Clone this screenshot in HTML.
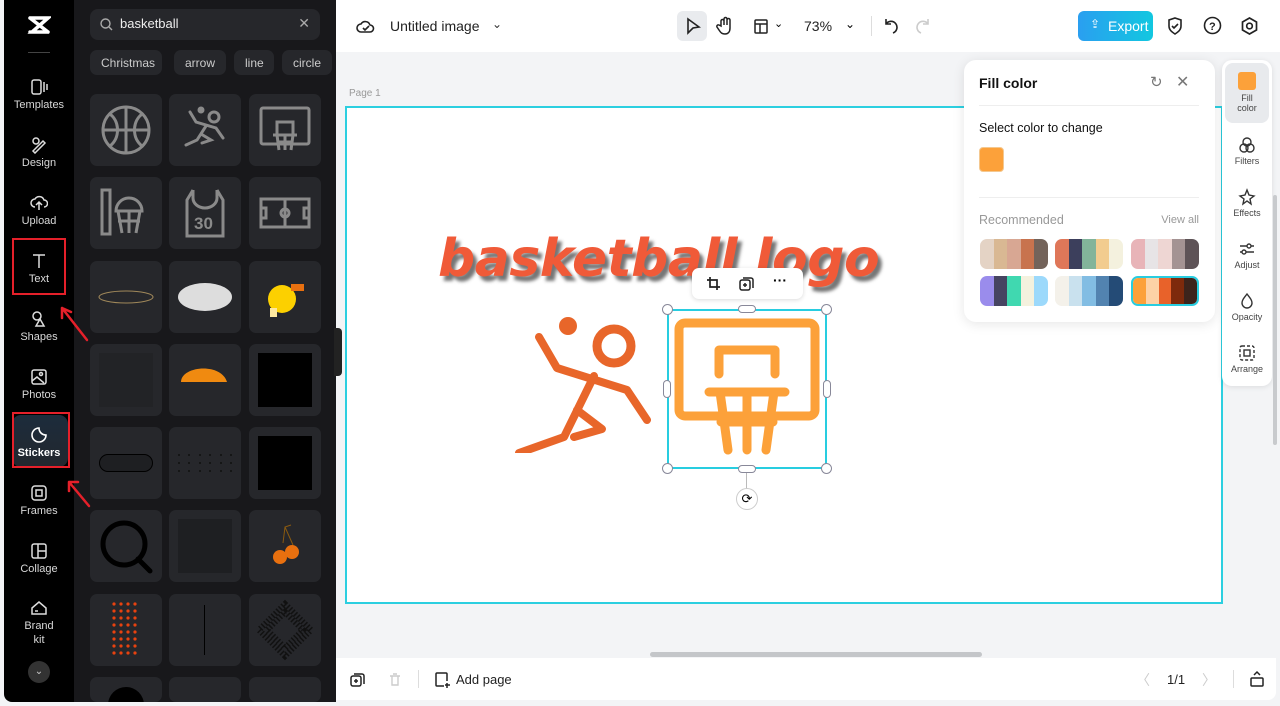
<!DOCTYPE html>
<html><head><meta charset="utf-8"><style>
*{box-sizing:border-box;margin:0;padding:0}
html,body{width:1280px;height:706px;overflow:hidden}
body{background:#f3f4f6;font-family:"Liberation Sans",sans-serif;position:relative}
.nav{position:absolute;left:4px;top:0;width:70px;height:702px;background:#000;border-radius:0 0 0 8px}
.ni{position:absolute;left:0;width:70px;text-align:center;color:#d8d8d8;font-size:11px}
.ni svg{display:block;margin:0 auto 3px}
.panel{position:absolute;left:74px;top:0;width:262px;height:702px;background:#18181b;overflow:hidden}
.search{position:absolute;left:16px;top:9px;width:230px;height:31px;background:#26272b;border-radius:8px;color:#eee;font-size:13px;padding:7px 0 0 30px}
.chip{position:absolute;top:50px;height:25px;background:#26272b;border-radius:7px;color:#ccc;font-size:12px;padding:6px 11px 0;white-space:nowrap}
.tile{position:absolute;width:72px;height:72px;background:#26272b;border-radius:7px}
.top{position:absolute;left:336px;top:0;width:944px;height:52px;background:#fff}
.bot{position:absolute;left:336px;top:658px;width:940px;height:42px;background:#fff;border-radius:0 0 8px 0}
.page{position:absolute;left:345px;top:106px;width:878px;height:498px;background:#fff;border:2px solid #2ccfe0}
.fc{position:absolute;left:964px;top:60px;width:251px;height:262px;background:#fff;border-radius:12px;box-shadow:0 2px 12px rgba(0,0,0,.1)}
.pal{position:absolute;width:68px;height:30px;border-radius:7px;overflow:hidden;display:flex}
.pal i{flex:1}
.rs{position:absolute;left:1222px;top:60px;width:50px;height:326px;background:#fff;border-radius:10px;box-shadow:0 1px 6px rgba(0,0,0,.1)}
.ri{position:absolute;left:0;width:50px;text-align:center;font-size:9px;color:#444}
.ri svg{display:block;margin:0 auto 2px}
</style></head><body>
<div class="nav">
 <svg style="position:absolute;left:23px;top:15px" width="24" height="22" viewBox="0 0 24 22"><path d="M3 3h18L5 17h16M3 17h0M3 3l18 14" stroke="#fff" stroke-width="3.5" fill="none" stroke-linecap="round"/></svg>
 <div style="position:absolute;left:24px;top:52px;width:22px;height:1px;background:#444"></div>
 <div class="ni" style="top:78px"><svg width="18" height="18" viewBox="0 0 18 18" fill="none" stroke="#ddd" stroke-width="1.5"><rect x="2" y="2" width="9" height="14" rx="2"/><path d="M14 4v10M17 6v6"/></svg>Templates</div>
 <div class="ni" style="top:136px"><svg width="18" height="18" viewBox="0 0 18 18" fill="none" stroke="#ddd" stroke-width="1.5"><circle cx="6" cy="5" r="3"/><path d="M3 15l10-10 2 2-10 10z"/></svg>Design</div>
 <div class="ni" style="top:194px"><svg width="18" height="18" viewBox="0 0 18 18" fill="none" stroke="#ddd" stroke-width="1.5"><path d="M5 13a4 4 0 010-8 5 5 0 019 1 3.5 3.5 0 010 7M9 9v7M6 11l3-3 3 3"/></svg>Upload</div>
 <div class="ni" style="top:252px;color:#ddd"><svg width="18" height="18" viewBox="0 0 18 18" fill="none" stroke="#ddd" stroke-width="1.5"><path d="M3 3h12M9 3v13"/></svg>Text</div>
 <div style="position:absolute;left:8px;top:238px;width:54px;height:57px;border:2px solid #e5202a"></div>
 <div class="ni" style="top:310px"><svg width="18" height="18" viewBox="0 0 18 18" fill="none" stroke="#ddd" stroke-width="1.5"><circle cx="7" cy="6" r="4"/><path d="M10 9l-4 7h8z"/></svg>Shapes</div>
 <div class="ni" style="top:368px"><svg width="18" height="18" viewBox="0 0 18 18" fill="none" stroke="#ddd" stroke-width="1.5"><rect x="2" y="2" width="14" height="14" rx="2"/><circle cx="11" cy="6" r="1.5"/><path d="M2 13l5-4 7 6"/></svg>Photos</div>
 <div style="position:absolute;left:8px;top:415px;width:56px;height:52px;border-radius:9px;background:linear-gradient(#1c2c3c,#23272e)"></div>
 <div class="ni" style="top:426px;color:#fff;font-weight:bold"><svg width="18" height="18" viewBox="0 0 18 18" fill="none" stroke="#fff" stroke-width="1.6"><path d="M16 9a7 7 0 11-7-7c0 4 3 7 7 7z"/></svg>Stickers</div>
 <div style="position:absolute;left:8px;top:412px;width:58px;height:56px;border:2px solid #e5202a"></div>
 <div class="ni" style="top:484px"><svg width="18" height="18" viewBox="0 0 18 18" fill="none" stroke="#ddd" stroke-width="1.5"><rect x="2" y="2" width="14" height="14" rx="3"/><rect x="6" y="6" width="6" height="6"/></svg>Frames</div>
 <div class="ni" style="top:542px"><svg width="18" height="18" viewBox="0 0 18 18" fill="none" stroke="#ddd" stroke-width="1.5"><rect x="2" y="2" width="14" height="14" rx="2"/><path d="M8 2v14M8 9h8"/></svg>Collage</div>
 <div class="ni" style="top:600px;line-height:14px"><svg width="18" height="16" viewBox="0 0 18 16" fill="none" stroke="#ddd" stroke-width="1.5"><path d="M2 8l7-6 7 6v6H2zM5 11h3"/></svg>Brand<br>kit</div>
 <div style="position:absolute;left:24px;top:661px;width:22px;height:22px;border-radius:50%;background:#333;color:#ccc;font-size:10px;text-align:center;line-height:22px">⌄</div>
</div>
<div class="panel">
 <div class="search"><svg style="position:absolute;left:10px;top:9px" width="13" height="13"><circle cx="5.5" cy="5.5" r="4.5" stroke="#aaa" fill="none" stroke-width="1.4"/><path d="M9 9l3 3" stroke="#aaa" stroke-width="1.4"/></svg>basketball<span style="position:absolute;right:10px;top:6px;color:#aaa;font-size:14px">✕</span></div>
 <div class="chip" style="left:16px;width:72px">Christmas</div>
 <div class="chip" style="left:100px;width:52px">arrow</div>
 <div class="chip" style="left:160px;width:40px">line</div>
 <div class="chip" style="left:208px;width:50px">circle</div>
 <div class="tile" style="left:16px;top:94px"><svg width="72" height="72" fill="none" stroke="#8a8a8a" stroke-width="3"><circle cx="36" cy="36" r="23"/><path d="M13 36h46M36 13v46M20 20c10 8 10 24 0 32M52 20c-10 8-10 24 0 32"/></svg></div>
 <div class="tile" style="left:95px;top:94px"><svg width="72" height="72" fill="none" stroke="#8a8a8a" stroke-width="3" stroke-linecap="round"><circle cx="32" cy="16" r="2" fill="#8a8a8a"/><circle cx="45" cy="23" r="5"/><path d="M21 18l6 10 20 6 7 10M37 32l-9 14-11 5M32 40l10 6-9 3"/></svg></div>
 <div class="tile" style="left:175px;top:94px"><svg width="72" height="72" fill="none" stroke="#8a8a8a" stroke-width="3"><rect x="12" y="14" width="48" height="36" rx="2"/><path d="M28 40v-12h16v12M24 41h24M28 41l2 15M44 41l-2 15M36 41v15M28 48h16"/></svg></div>
 <div class="tile" style="left:16px;top:177px"><svg width="72" height="72" fill="none" stroke="#8a8a8a" stroke-width="3"><rect x="12" y="13" width="8" height="44"/><path d="M26 34a13 13 0 0126 0zM28 34l4 22M50 34l-4 22M39 34v22M28 44h22"/></svg></div>
 <div class="tile" style="left:95px;top:177px"><svg width="72" height="72" fill="none" stroke="#8a8a8a" stroke-width="3"><path d="M24 13v8a12 10 0 0024 0v-8M24 13l-6 10v36h36V23l-6-10"/><text x="25" y="52" font-size="17" font-weight="bold" fill="#8a8a8a" stroke="none" font-family="Liberation Sans">30</text></svg></div>
 <div class="tile" style="left:175px;top:177px"><svg width="72" height="72" fill="none" stroke="#8a8a8a" stroke-width="3"><rect x="12" y="22" width="48" height="28"/><path d="M36 22v28M12 31h5v10h-5M60 31h-5v10h5"/><circle cx="36" cy="36" r="4"/></svg></div>
 <div class="tile" style="left:16px;top:261px"><svg width="72" height="72"><ellipse cx="36" cy="36" rx="27" ry="6" fill="none" stroke="#a0885a" stroke-width="1"/></svg></div>
 <div class="tile" style="left:95px;top:261px"><svg width="72" height="72"><ellipse cx="36" cy="36" rx="27" ry="14" fill="#ddd"/></svg></div>
 <div class="tile" style="left:175px;top:261px"><svg width="72" height="72"><circle cx="33" cy="38" r="14" fill="#fcd000"/><rect x="42" y="23" width="13" height="7" fill="#e87010"/><rect x="21" y="47" width="7" height="9" fill="#fde8a0"/></svg></div>
 <div class="tile" style="left:16px;top:344px"><div style="margin:9px;width:54px;height:54px;background:#222326"></div></div>
 <div class="tile" style="left:95px;top:344px"><svg width="72" height="72"><path d="M12 38c0-16 40-20 46 0z" fill="#f08a10"/></svg></div>
 <div class="tile" style="left:175px;top:344px"><div style="margin:9px;width:54px;height:54px;background:#000"></div></div>
 <div class="tile" style="left:16px;top:427px"><div style="margin:27px 9px;width:54px;height:18px;border-radius:9px;border:1px solid #000;background:#1e1f22"></div></div>
 <div class="tile" style="left:95px;top:427px"><svg width="72" height="72" fill="#111"><g id="d"><circle cx="10" cy="28" r="1"/><circle cx="20" cy="28" r="1"/><circle cx="31" cy="28" r="1"/><circle cx="41" cy="28" r="1"/><circle cx="52" cy="28" r="1"/><circle cx="62" cy="28" r="1"/></g><use href="#d" y="8"/><use href="#d" y="16"/></svg></div>
 <div class="tile" style="left:175px;top:427px"><div style="margin:9px;width:54px;height:54px;background:#000"></div></div>
 <div class="tile" style="left:16px;top:510px"><svg width="72" height="72" fill="none" stroke="#000" stroke-width="5"><circle cx="34" cy="34" r="21"/><path d="M48 49l12 12" stroke-linecap="round"/></svg></div>
 <div class="tile" style="left:95px;top:510px"><div style="margin:9px;width:54px;height:54px;background:#1e1f22"></div></div>
 <div class="tile" style="left:175px;top:510px"><svg width="72" height="72"><path d="M34 33l2-16 6-2M36 17l8 18" stroke="#8a5a10" fill="none"/><circle cx="31" cy="47" r="7" fill="#e8700f"/><circle cx="43" cy="42" r="7" fill="#e8700f"/></svg></div>
 <div class="tile" style="left:16px;top:594px"><svg width="72" height="72" fill="#e8420f"><g id="r"><circle cx="24" cy="10" r="1.6"/><circle cx="31" cy="10" r="1.6"/><circle cx="38" cy="10" r="1.6"/><circle cx="45" cy="10" r="1.6"/></g><use href="#r" y="7"/><use href="#r" y="14"/><use href="#r" y="21"/><use href="#r" y="28"/><use href="#r" y="35"/><use href="#r" y="42"/><use href="#r" y="49"/></svg></div>
 <div class="tile" style="left:95px;top:594px"><div style="margin:11px 35px;width:1px;height:50px;background:#000"></div></div>
 <div class="tile" style="left:175px;top:594px"><svg width="72" height="72"><path d="M36 10L62 36 36 62 10 36z" fill="none" stroke="#111" stroke-width="6" stroke-dasharray="1.5 2"/><path d="M36 18L54 36 36 54 18 36z" fill="none" stroke="#111" stroke-width="6" stroke-dasharray="1.5 2"/></svg></div>
 <div class="tile" style="left:16px;top:677px;height:25px;overflow:hidden"><div style="margin:10px 18px;width:36px;height:36px;border-radius:50%;background:#000"></div></div>
 <div class="tile" style="left:95px;top:677px;height:25px"></div>
 <div class="tile" style="left:175px;top:677px;height:25px"></div>
</div>
<svg style="position:absolute;left:54px;top:302px" width="40" height="44"><path d="M33 38L8 6M8 6l0 10M8 6l9 4" stroke="#e5202a" stroke-width="2.5" fill="none" stroke-linecap="round"/></svg>
<svg style="position:absolute;left:62px;top:476px" width="32" height="34"><path d="M27 30L7 6M7 6v9M7 6h9" stroke="#e5202a" stroke-width="2.5" fill="none" stroke-linecap="round"/></svg>
<div style="position:absolute;left:334px;top:328px;width:8px;height:48px;background:#222;border-radius:0 4px 4px 0"></div>
<div class="top">
 <svg style="position:absolute;left:20px;top:17px" width="20" height="18" fill="none" stroke="#222" stroke-width="1.6"><path d="M5 15a4 4 0 010-8 5 5 0 019 1 3.5 3.5 0 010 7zM7 11l2 2 4-4"/></svg>
 <div style="position:absolute;left:54px;top:18px;font-size:14px;color:#222">Untitled image</div>
 <div style="position:absolute;left:156px;top:17px;font-size:12px;color:#333">⌄</div>
 <div style="position:absolute;left:341px;top:11px;width:30px;height:30px;border-radius:6px;background:#e9ebee"></div>
 <svg style="position:absolute;left:349px;top:17px" width="16" height="18" fill="none" stroke="#222" stroke-width="1.6"><path d="M3 2l11 8-6 1-5 5z"/></svg>
 <svg style="position:absolute;left:380px;top:16px" width="18" height="20" fill="none" stroke="#222" stroke-width="1.5"><path d="M5 10V5a1.5 1.5 0 013 0v4V3a1.5 1.5 0 013 0v6V4a1.5 1.5 0 013 0v8c0 4-2 6-5 6s-4-1-6-4l-2-3a1.5 1.5 0 012-2z"/></svg>
 <svg style="position:absolute;left:417px;top:18px" width="16" height="16" fill="none" stroke="#222" stroke-width="1.5"><rect x="2" y="2" width="12" height="13" rx="1"/><path d="M2 6h12M7 6v9"/></svg>
 <div style="position:absolute;left:438px;top:17px;font-size:11px">⌄</div>
 <div style="position:absolute;left:468px;top:18px;font-size:14px;color:#222">73%</div>
 <div style="position:absolute;left:509px;top:17px;font-size:12px">⌄</div>
 <div style="position:absolute;left:535px;top:16px;width:1px;height:20px;background:#ddd"></div>
 <svg style="position:absolute;left:546px;top:17px" width="16" height="18" fill="none" stroke="#222" stroke-width="1.6"><path d="M4 2v5h5M4 7a6 6 0 117 9"/></svg>
 <svg style="position:absolute;left:580px;top:17px" width="16" height="18" fill="none" stroke="#ccc" stroke-width="1.6"><path d="M12 2v5H7M12 7a6 6 0 10-7 9"/></svg>
 <div style="position:absolute;left:742px;top:11px;width:75px;height:30px;border-radius:6px;background:linear-gradient(90deg,#2a9ff0,#12c7e0);color:#fff;font-size:14px;padding:7px 0 0 30px">Export<span style="position:absolute;left:12px;top:6px;font-size:12px">⇪</span></div>
 <svg style="position:absolute;left:830px;top:16px" width="18" height="20" fill="none" stroke="#222" stroke-width="1.6"><path d="M9 2l6 2v6c0 4-3 6-6 8-3-2-6-4-6-8V4zM6 10l2 2 4-4"/></svg>
 <svg style="position:absolute;left:867px;top:16px" width="19" height="19" fill="none" stroke="#222" stroke-width="1.6"><circle cx="9.5" cy="9.5" r="8"/><text x="6" y="14" font-size="11" font-weight="bold" fill="#222" stroke="none" font-family="Liberation Sans">?</text></svg>
 <svg style="position:absolute;left:904px;top:16px" width="19" height="20" fill="none" stroke="#222" stroke-width="1.7"><path d="M9.5 2l7 4v8l-7 4-7-4V6z"/><circle cx="9.5" cy="10" r="2.8"/></svg>
</div>
<div style="position:absolute;left:349px;top:88px;font-size:10px;color:#999">Page 1</div>
<div class="page"></div>
<div style="position:absolute;left:438px;top:229px;font-size:52px;font-weight:bold;font-style:italic;color:#f05a38;text-shadow:4px 5px 3px rgba(60,60,60,.7);letter-spacing:-0.5px;white-space:nowrap;font-family:'DejaVu Sans','Liberation Sans',sans-serif">basketball logo</div>
<svg style="position:absolute;left:515px;top:313px" width="140" height="140" fill="none" stroke="#e8662a" stroke-width="8" stroke-linecap="round" stroke-linejoin="round"><circle cx="53" cy="13" r="9" fill="#e8662a" stroke="none"/><circle cx="99" cy="33" r="17" stroke-width="9"/><path d="M24 24l18 31 70 22 20 30M79 63l-30 61-45 16M62 97l25 19-28 8"/></svg>
<svg style="position:absolute;left:674px;top:318px" width="146" height="140" fill="none" stroke="#fca13a" stroke-width="9" stroke-linecap="round" stroke-linejoin="round"><rect x="5" y="5" width="136" height="93" rx="6"/><path d="M45 56V32h56v24M35 74h76M46 74l8 58M100 74l-8 58M73 74v58M47 104h52"/></svg>
<div style="position:absolute;left:667px;top:309px;width:160px;height:160px;border:2px solid #28cde0"></div>
<div style="position:absolute;left:662px;top:304px;width:11px;height:11px;border-radius:50%;background:#fff;border:1px solid #889"></div>
<div style="position:absolute;left:821px;top:304px;width:11px;height:11px;border-radius:50%;background:#fff;border:1px solid #889"></div>
<div style="position:absolute;left:662px;top:463px;width:11px;height:11px;border-radius:50%;background:#fff;border:1px solid #889"></div>
<div style="position:absolute;left:821px;top:463px;width:11px;height:11px;border-radius:50%;background:#fff;border:1px solid #889"></div>
<div style="position:absolute;left:738px;top:305px;width:18px;height:8px;border-radius:4px;background:#fff;border:1px solid #889"></div>
<div style="position:absolute;left:738px;top:465px;width:18px;height:8px;border-radius:4px;background:#fff;border:1px solid #889"></div>
<div style="position:absolute;left:663px;top:380px;width:8px;height:18px;border-radius:4px;background:#fff;border:1px solid #889"></div>
<div style="position:absolute;left:823px;top:380px;width:8px;height:18px;border-radius:4px;background:#fff;border:1px solid #889"></div>
<div style="position:absolute;left:746px;top:473px;width:1px;height:16px;background:#bbb"></div>
<div style="position:absolute;left:736px;top:488px;width:22px;height:22px;border-radius:50%;background:#fff;border:1px solid #ccc;text-align:center;line-height:20px;font-size:13px">⟳</div>
<div style="position:absolute;left:692px;top:268px;width:111px;height:31px;background:#fff;border-radius:7px;box-shadow:0 1px 5px rgba(0,0,0,.15)">
 <svg style="position:absolute;left:14px;top:8px" width="15" height="15" fill="none" stroke="#222" stroke-width="1.7"><path d="M4 1v10h10M1 4h10v10"/></svg>
 <svg style="position:absolute;left:47px;top:8px" width="15" height="15" fill="none" stroke="#222" stroke-width="1.5"><rect x="1" y="4" width="10" height="10" rx="2"/><path d="M4 2h8a2 2 0 012 2v8M6 7v4M4 9h4"/></svg>
 <div style="position:absolute;left:81px;top:4px;font-size:14px;font-weight:bold">···</div>
</div>
<div class="fc">
 <div style="position:absolute;left:15px;top:15px;font-size:14px;font-weight:bold;color:#111">Fill color</div>
 <div style="position:absolute;left:186px;top:13px;font-size:15px;color:#777">↻</div>
 <div style="position:absolute;left:212px;top:12px;font-size:16px;color:#777">✕</div>
 <div style="position:absolute;left:15px;top:45px;width:220px;height:1px;background:#eee"></div>
 <div style="position:absolute;left:15px;top:61px;font-size:12.5px;color:#111">Select color to change</div>
 <div style="position:absolute;left:15px;top:87px;width:25px;height:25px;border-radius:4px;background:#fca13a;border:1px solid #f4c890"></div>
 <div style="position:absolute;left:15px;top:137px;width:220px;height:1px;background:#eee"></div>
 <div style="position:absolute;left:15px;top:153px;font-size:12.5px;color:#999">Recommended</div>
 <div style="position:absolute;right:16px;top:154px;font-size:11px;color:#999">View all</div>
 <div class="pal" style="left:16px;top:179px"><i style="background:#e4d3c5"></i><i style="background:#d9b893"></i><i style="background:#d8a793"></i><i style="background:#c8734e"></i><i style="background:#73635a"></i></div>
 <div class="pal" style="left:91px;top:179px"><i style="background:#df7759"></i><i style="background:#3c3f5c"></i><i style="background:#82b49a"></i><i style="background:#f2cc8f"></i><i style="background:#f4f1de"></i></div>
 <div class="pal" style="left:167px;top:179px"><i style="background:#e8b4b8"></i><i style="background:#e7e4e6"></i><i style="background:#eed6d3"></i><i style="background:#a49393"></i><i style="background:#5e5357"></i></div>
 <div class="pal" style="left:16px;top:216px"><i style="background:#9a8cec"></i><i style="background:#464461"></i><i style="background:#40d8b0"></i><i style="background:#f4f1de"></i><i style="background:#9cd9fb"></i></div>
 <div class="pal" style="left:91px;top:216px"><i style="background:#f4f1ea"></i><i style="background:#c9e1ee"></i><i style="background:#82bde3"></i><i style="background:#5283b0"></i><i style="background:#244b76"></i></div>
 <div class="pal" style="left:167px;top:216px;border:2px solid #28cde0;box-shadow:0 0 0 1px #fff inset"><i style="background:#fca13a"></i><i style="background:#fdd2a6"></i><i style="background:#e8622a"></i><i style="background:#7d2a0c"></i><i style="background:#3c241c"></i></div>
</div>
<div class="rs">
 <div style="position:absolute;left:3px;top:3px;width:44px;height:60px;border-radius:8px;background:#e8eaed"></div>
 <div class="ri" style="top:12px"><div style="width:18px;height:18px;margin:0 auto 3px;border-radius:3px;background:#fca13a"></div>Fill<br>color</div>
 <div class="ri" style="top:76px"><svg width="18" height="18" fill="none" stroke="#333" stroke-width="1.4"><circle cx="9" cy="6" r="4"/><circle cx="6" cy="12" r="4"/><circle cx="12" cy="12" r="4"/></svg>Filters</div>
 <div class="ri" style="top:128px"><svg width="18" height="18" fill="none" stroke="#333" stroke-width="1.4"><path d="M9 2l2 5 5 1-4 3 1 5-4-3-4 3 1-5-4-3 5-1z"/></svg>Effects</div>
 <div class="ri" style="top:180px"><svg width="18" height="18" fill="none" stroke="#333" stroke-width="1.4"><path d="M2 6h14M2 12h14"/><circle cx="11" cy="6" r="2" fill="#fff"/><circle cx="6" cy="12" r="2" fill="#fff"/></svg>Adjust</div>
 <div class="ri" style="top:232px"><svg width="18" height="18" fill="none" stroke="#333" stroke-width="1.4"><path d="M9 2c3 4 5 6 5 9a5 5 0 01-10 0c0-3 2-5 5-9z"/></svg>Opacity</div>
 <div class="ri" style="top:284px"><svg width="18" height="18" fill="none" stroke="#333" stroke-width="1.4"><rect x="2" y="2" width="14" height="14" rx="2" stroke-dasharray="3 2"/><rect x="6" y="6" width="6" height="6"/></svg>Arrange</div>
</div>
<div style="position:absolute;left:1273px;top:195px;width:4px;height:250px;background:#c8cacd;border-radius:2px"></div>
<div style="position:absolute;left:650px;top:652px;width:332px;height:5px;background:#c4c6c9;border-radius:3px"></div>
<div class="bot">
 <svg style="position:absolute;left:14px;top:14px" width="15" height="15" fill="none" stroke="#222" stroke-width="1.5"><rect x="1" y="4" width="10" height="10" rx="2"/><path d="M4 2h8a2 2 0 012 2v8M6 7v4M4 9h4"/></svg>
 <svg style="position:absolute;left:52px;top:14px" width="14" height="15" fill="none" stroke="#ccc" stroke-width="1.4"><path d="M2 4h10M4 4v9h6V4M5 2h4"/></svg>
 <div style="position:absolute;left:82px;top:12px;width:1px;height:18px;background:#ddd"></div>
 <svg style="position:absolute;left:98px;top:13px" width="17" height="17" fill="none" stroke="#222" stroke-width="1.5"><path d="M10 15H3a1 1 0 01-1-1V3a1 1 0 011-1h9a1 1 0 011 1v7M13 12v5M11 14h5"/></svg>
 <div style="position:absolute;left:120px;top:14px;font-size:13px;color:#222">Add page</div>
 <div style="position:absolute;left:800px;top:12px;font-size:14px;color:#ccc">〈</div>
 <div style="position:absolute;left:831px;top:14px;font-size:13px;color:#222">1/1</div>
 <div style="position:absolute;left:866px;top:12px;font-size:14px;color:#ccc">〉</div>
 <div style="position:absolute;left:897px;top:12px;width:1px;height:18px;background:#ddd"></div>
 <svg style="position:absolute;left:913px;top:12px" width="16" height="18" fill="none" stroke="#222" stroke-width="1.5"><rect x="2" y="8" width="12" height="8" rx="1"/><path d="M5 5l3-3 3 3"/></svg>
</div>
</body></html>
